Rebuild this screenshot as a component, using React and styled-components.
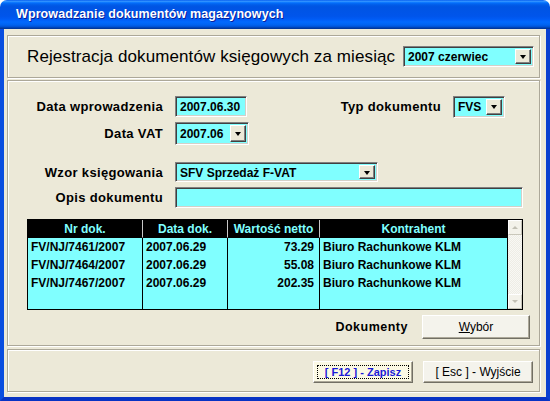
import React from "react";
import styled, { createGlobalStyle } from "styled-components";

const Global = createGlobalStyle`
  html, body { margin: 0; padding: 0; background: #ffffff; }
  body { font-family: "Liberation Sans", Arial, sans-serif; }
`;

const CYAN = "#80FFFF";
const FACE = "#ECE9D8";

const Window = styled.div`
  width: 550px;
  height: 401px;
  display: flex;
  flex-direction: column;
  overflow: hidden;
`;

const TitleBar = styled.div`
  height: 29px;
  flex: none;
  border-radius: 7px 7px 0 0;
  background: linear-gradient(
    to bottom,
    #0058ee 0%,
    #3593ff 4%,
    #288eff 6%,
    #127dff 8%,
    #036ffc 10%,
    #0262ee 14%,
    #0057e5 20%,
    #0054e3 24%,
    #0055eb 56%,
    #005bf5 66%,
    #026afe 76%,
    #0062ef 86%,
    #0052d6 92%,
    #0040ab 96%,
    #003092 100%
  );
  display: flex;
  align-items: center;
  padding-left: 16px;
  padding-bottom: 1px;
  box-sizing: border-box;
`;

const TitleText = styled.span`
  color: #ffffff;
  font-weight: bold;
  font-size: 12.5px;
  letter-spacing: 0.1px;
  text-shadow: 1px 1px 0 #0a1f9c;
`;

const Body = styled.div`
  flex: 1;
  background: ${FACE};
  border-left: 4px solid #0a4ee0;
  border-right: 4px solid #0a40d0;
  border-bottom: 4px solid #0833c4;
  padding: 6px 6px 4px 3px;
  display: flex;
  flex-direction: column;
  gap: 2px;
`;

const Frame = styled.div`
  border: 1px solid #aca899;
  box-shadow: inset 1px 1px 0 #ffffff, 1px 1px 0 #ffffff;
  box-sizing: border-box;
  height: ${(p) => p.$h}px;
  flex: none;
`;

const HeaderFrame = styled(Frame)`
  display: flex;
  align-items: center;
  justify-content: space-between;
  padding: 0 5px 0 19px;
`;

const HeaderTitle = styled.span`
  font-size: 17px;
  color: #000;
  letter-spacing: 0.1px;
`;

const MainFrame = styled(Frame)`
  display: flex;
  flex-direction: column;
  padding-top: 15px;
`;

const ButtonFrame = styled(Frame)`
  display: flex;
  justify-content: flex-end;
  align-items: flex-start;
  gap: 10px;
  padding: 11px 6px 0 0;
  margin-top: 1px;
`;

const FieldRow = styled.div`
  display: flex;
  align-items: center;
  height: ${(p) => p.$h}px;
  margin-top: ${(p) => p.$mt || 0}px;
`;

const Label = styled.span`
  font-weight: bold;
  font-size: 13px;
  letter-spacing: 0.35px;
  color: #000;
  text-align: right;
  width: ${(p) => p.$w || 155}px;
  margin-right: ${(p) => (p.$mr ?? 12)}px;
  flex: none;
  white-space: nowrap;
`;

const SideGroup = styled.div`
  display: flex;
  align-items: center;
  margin-left: auto;
  margin-right: 34px;
`;

const Sunken = styled.div`
  box-sizing: border-box;
  width: ${(p) => p.$w}px;
  height: ${(p) => p.$h}px;
  background: ${CYAN};
  border: 1px solid;
  border-color: #808080 #ffffff #ffffff #808080;
  box-shadow: inset 1px 1px 0 #404040, inset -1px -1px 0 #d4d0c8;
  display: flex;
  align-items: center;
  padding: 2px 2px 2px 4px;
  font-weight: bold;
  font-size: 12px;
  color: #000;
  flex: none;
`;

const ComboText = styled.span`
  flex: 1;
  align-self: stretch;
  display: flex;
  align-items: center;
  padding-top: 1px;
`;

const DropBtn = styled.span`
  width: 16px;
  align-self: stretch;
  box-sizing: border-box;
  background: ${FACE};
  border: 1px solid;
  border-color: #ffffff #404040 #404040 #ffffff;
  box-shadow: inset -1px -1px 0 #808080;
  display: flex;
  align-items: center;
  justify-content: center;
  flex: none;
`;

const Arrow = styled.span`
  width: 0;
  height: 0;
  border-left: 3.5px solid transparent;
  border-right: 3.5px solid transparent;
  border-top: 4px solid #000;
  margin-top: 1px;
`;

const Combo = ({ w, h, value }) => (
  <Sunken $w={w} $h={h}>
    <ComboText>{value}</ComboText>
    <DropBtn>
      <Arrow />
    </DropBtn>
  </Sunken>
);

const Grid = styled.div`
  margin: 11px 0 0 19px;
  width: 496px;
  height: 91px;
  box-sizing: border-box;
  border: 1px solid #000;
  display: flex;
  background: ${CYAN};
  flex: none;
`;

const Columns = styled.div`
  flex: 1;
  display: grid;
  grid-template-columns: 115px 85px 92px 1fr;
  grid-template-rows: 18px repeat(3, 18px) 1fr;
`;

const HeadCell = styled.div`
  background: #000;
  color: ${CYAN};
  font-weight: bold;
  font-size: 12px;
  display: flex;
  align-items: center;
  justify-content: center;
  border-right: ${(p) => (p.$last ? "none" : "1px solid #c8c8c8")};
  border-bottom: 1px solid #000;
`;

const Cell = styled.div`
  font-weight: bold;
  font-size: 12px;
  color: #000;
  display: flex;
  align-items: center;
  justify-content: ${(p) => (p.$right ? "flex-end" : "flex-start")};
  padding: 0 ${(p) => (p.$right ? 5 : 2)}px 0 3px;
  border-right: ${(p) => (p.$last ? "none" : "1px solid #000")};
  white-space: nowrap;
`;

const ScrollBar = styled.div`
  width: 14px;
  flex: none;
  display: flex;
  flex-direction: column;
  justify-content: space-between;
  background: repeating-conic-gradient(#eeede5 0% 25%, #f8f8f4 0% 50%) 0 0 / 2px 2px;
  border-left: 1px solid #000;
`;

const ScrollBtn = styled.div`
  height: 15px;
  box-sizing: border-box;
  background: #f3f2ea;
  border: 1px solid;
  border-color: #ffffff #c9c7ba #c9c7ba #ffffff;
  display: flex;
  align-items: center;
  justify-content: center;
`;

const PaleArrow = styled.span`
  width: 0;
  height: 0;
  border-left: 3px solid transparent;
  border-right: 3px solid transparent;
  ${(p) =>
    p.$up
      ? "border-bottom: 3px solid #c2c0b4;"
      : "border-top: 3px solid #c2c0b4;"}
`;

const DocsRow = styled.div`
  display: flex;
  align-items: center;
  justify-content: flex-end;
  margin: 5px 9px 0 0;
  height: 24px;
  gap: 14px;
`;

const DocsLabel = styled.span`
  font-weight: bold;
  font-size: 12.5px;
  letter-spacing: 0.5px;
  color: #000;
`;

const Button = styled.button`
  width: ${(p) => p.$w}px;
  height: ${(p) => p.$h}px;
  box-sizing: border-box;
  padding: 0;
  background: ${(p) => (p.$primary ? "#fbf9e4" : "#f4f3ec")};
  border: 1px solid;
  border-color: #ffffff #716f64 #716f64 #ffffff;
  box-shadow: inset -1px -1px 0 #aca899;
  font-family: "Liberation Sans", Arial, sans-serif;
  font-size: 12px;
  font-weight: ${(p) => (p.$primary ? "bold" : "normal")};
  color: ${(p) => (p.$primary ? "#1a1ad8" : "#000")};
  display: flex;
  align-items: center;
  justify-content: center;
  white-space: nowrap;
`;

const FocusRect = styled.span`
  display: flex;
  align-items: center;
  justify-content: center;
  width: calc(100% - 6px);
  height: calc(100% - 6px);
  border: 1px dotted #000;
  box-sizing: border-box;
  font-size: 11px;
`;

const rows = [
  ["FV/NJ/7461/2007", "2007.06.29", "73.29", "Biuro Rachunkowe KLM"],
  ["FV/NJ/7464/2007", "2007.06.29", "55.08", "Biuro Rachunkowe KLM"],
  ["FV/NJ/7467/2007", "2007.06.29", "202.35", "Biuro Rachunkowe KLM"],
];

export default function App() {
  return (
    <>
      <Global />
      <Window>
        <TitleBar>
          <TitleText>Wprowadzanie dokumentów magazynowych</TitleText>
        </TitleBar>
        <Body>
          <HeaderFrame $h={43}>
            <HeaderTitle>Rejestracja dokumentów księgowych za miesiąc</HeaderTitle>
            <Combo w={131} h={21} value="2007 czerwiec" />
          </HeaderFrame>

          <MainFrame $h={266}>
            <FieldRow $h={21}>
              <Label>Data wprowadzenia</Label>
              <Sunken $w={72} $h={21}>2007.06.30</Sunken>
              <SideGroup>
                <Label $w={110} $mr={12}>Typ dokumentu</Label>
                <Combo w={52} h={22} value="FVS" />
              </SideGroup>
            </FieldRow>
            <FieldRow $h={23} $mt={5}>
              <Label>Data VAT</Label>
              <Combo w={74} h={23} value="2007.06" />
            </FieldRow>
            <FieldRow $h={20} $mt={17}>
              <Label>Wzor księgowania</Label>
              <Combo w={203} h={20} value="SFV Sprzedaż F-VAT" />
            </FieldRow>
            <FieldRow $h={21} $mt={5}>
              <Label>Opis dokumentu</Label>
              <Sunken $w={348} $h={21} />
            </FieldRow>

            <Grid>
              <Columns>
                <HeadCell>Nr dok.</HeadCell>
                <HeadCell>Data dok.</HeadCell>
                <HeadCell>Wartość netto</HeadCell>
                <HeadCell $last>Kontrahent</HeadCell>
                {rows.map((r) => (
                  <React.Fragment key={r[0]}>
                    <Cell>{r[0]}</Cell>
                    <Cell>{r[1]}</Cell>
                    <Cell $right>{r[2]}</Cell>
                    <Cell $last>{r[3]}</Cell>
                  </React.Fragment>
                ))}
                <Cell />
                <Cell />
                <Cell />
                <Cell $last />
              </Columns>
              <ScrollBar>
                <ScrollBtn>
                  <PaleArrow $up />
                </ScrollBtn>
                <ScrollBtn>
                  <PaleArrow />
                </ScrollBtn>
              </ScrollBar>
            </Grid>

            <DocsRow>
              <DocsLabel>Dokumenty</DocsLabel>
              <Button $w={108} $h={24}>
                <span>
                  <u>W</u>ybór
                </span>
              </Button>
            </DocsRow>
          </MainFrame>

          <ButtonFrame $h={43}>
            <Button $w={100} $h={22} $primary>
              <FocusRect>[ F12 ] - Zapisz</FocusRect>
            </Button>
            <Button $w={110} $h={22}>
              [ Esc ] - Wyjście
            </Button>
          </ButtonFrame>
        </Body>
      </Window>
    </>
  );
}
